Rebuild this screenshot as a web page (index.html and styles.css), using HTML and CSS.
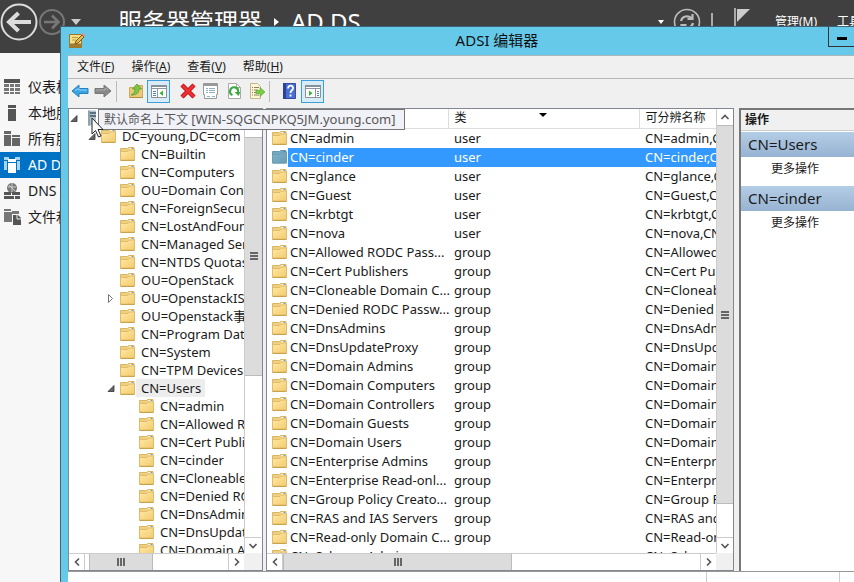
FILE: index.html
```html
<!DOCTYPE html>
<html lang="zh-CN">
<head>
<meta charset="utf-8">
<title>ADSI 编辑器</title>
<link rel="stylesheet" href="styles.css">
</head>
<body>
<svg class="sprite" aria-hidden="true">
  <defs>
    <linearGradient id="gold" x1="0" y1="0" x2="1" y2="1"><stop offset="0" stop-color="#ffe9a8"/><stop offset="1" stop-color="#f3cb6c"/></linearGradient>
    <linearGradient id="teal" x1="0" y1="0" x2="1" y2="1"><stop offset="0" stop-color="#7fb4c8"/><stop offset="1" stop-color="#689cb4"/></linearGradient>
    <symbol id="folder" viewBox="0 0 16 16">
      <path d="M.5 2.500h7l1-1h5.500v2h.5v10.500H.5z" fill="#f0d080" stroke="#d9b664"/>
      <path d="M9.500 2h4v1.500h-4z" fill="#fff6d8"/>
      <path d="M11.500 2h2v1h-2z" fill="#6f9dc0"/>
      <path d="M.5 14V5.500h7.500l1.500-1.500h5V14z" fill="url(#gold)" stroke="#e0bc68"/>
      <path d="M.5 14.500h14" stroke="#c9a24c"/>
    </symbol>
    <symbol id="folder-on" viewBox="0 0 16 16">
      <path d="M.5 2.500h7l1-1h5.500v2h.5v10.500H.5z" fill="#74a9be" stroke="#6698ae"/>
      <path d="M11.500 2h2v1h-2z" fill="#3f8fd0"/>
      <path d="M.5 14V5.500h7.500l1.500-1.500h5V14z" fill="url(#teal)" stroke="#6a9fb5"/>
    </symbol>
    <symbol id="open" viewBox="0 0 10 10"><path d="M8 2.500v6H2z" fill="#666" stroke="#333" stroke-width=".8"/></symbol>
    <symbol id="closed" viewBox="0 0 10 10"><path d="M2.500 1.500v8L6.500 5.500z" fill="#fff" stroke="#777"/></symbol>
    <symbol id="left" viewBox="0 0 16 16"><path d="M10 4.500L6.500 8l3.500 3.500" fill="none" stroke="#555" stroke-width="1.600"/></symbol>
    <symbol id="right" viewBox="0 0 16 16"><path d="M6 4.500L9.500 8 6 11.500" fill="none" stroke="#555" stroke-width="1.600"/></symbol>
    <symbol id="up" viewBox="0 0 16 16"><path d="M4.500 10L8 6.500l3.500 3.500" fill="none" stroke="#555" stroke-width="1.600"/></symbol>
    <symbol id="down" viewBox="0 0 16 16"><path d="M4.500 6L8 9.500 11.500 6" fill="none" stroke="#555" stroke-width="1.600"/></symbol>
  </defs>
</svg>

<div class="manager">
  <header class="banner">
    <button class="plain" aria-label="后退"><svg width="38" height="38" viewBox="0 0 38 38" fill="none" stroke="#dcdcdc"><circle cx="19" cy="19" r="17.500" stroke-width="2"/><path d="M31 19H9M18.500 10L9 19l9.500 9" stroke-width="4"/></svg></button>
    <button class="plain" aria-label="前进"><svg width="28" height="28" viewBox="0 0 28 28" fill="none" stroke="#777"><circle cx="14" cy="14" r="12" stroke-width="2"/><path d="M6 14h14M14 7.500l6.500 6.500-6.500 6.500" stroke-width="2.600"/></svg></button>
    <svg class="drop" width="10" height="6" viewBox="0 0 10 6"><path d="M0 0h10L5 6z" fill="#ccc"/></svg>
    <h1 class="crumbs">服务器管理器<svg width="5" height="8" viewBox="0 0 5 8"><path d="M0 0l5 4-5 4z" fill="#fff"/></svg>AD DS</h1>
    <svg class="drop-small" width="6" height="4" viewBox="0 0 6 4"><path d="M0 0h6L3 4z" fill="#fff"/></svg>
    <button class="plain refresh" aria-label="刷新"><svg width="28" height="28" viewBox="0 0 28 28" fill="none" stroke="#bbb"><circle cx="14" cy="14" r="12.500" stroke-width="1.600"/><path d="M8 13c1-5 7-6 10.500-3M19.500 6v5h-5M20 15c-1 5-7 6-10.500 3M8.500 22v-5h5" stroke-width="2.200"/></svg></button>
    <span class="banner-rule"></span>
    <button class="plain flag" aria-label="通知"><svg width="18" height="28" viewBox="0 0 18 28"><path d="M1 0h2v28H1z" fill="#aaa"/><path d="M4 1h13L4 14z" fill="#ccc"/></svg></button>
    <nav class="banner-menu"><a href="#">管理(M)</a><a href="#">工具(T)</a></nav>
  </header>
  <nav class="sidebar">
    <a href="#"><svg width="18" height="18" viewBox="0 0 18 18" fill="#777"><path d="M1 1h16v4H1z" fill="#555"/><path d="M1 6h5v3H1zM7 6h4v3H7zM12 6h5v3h-5zM1 10h5v3H1zM7 10h4v3H7zM12 10h5v3h-5zM1 14h5v2H1zM7 14h4v2H7zM12 14h5v2h-5z"/></svg>仪表板</a>
    <a href="#"><svg width="18" height="18" viewBox="0 0 18 18" fill="#555"><path d="M5 1h8v3H5zM5 5h8v12H5z"/></svg>本地服务器</a>
    <a href="#"><svg width="18" height="18" viewBox="0 0 18 18" fill="#666"><path d="M1 1h7v3H1zM1 5h7v11H1zM9 5h8v2H9zM9 8h8v8H9z"/></svg>所有服务器</a>
    <a href="#" class="current"><svg width="18" height="18" viewBox="0 0 18 18"><path d="M1 1h5v3H1zM1 5h3v9H1zM12 1h5v3h-5zM14 5h3v9h-3z" fill="#a9d4f1"/><path d="M5 3h8v3H5zM5 7h8v10H5z" fill="#fff"/></svg>AD DS</a>
    <a href="#"><svg width="18" height="18" viewBox="0 0 18 18"><circle cx="9" cy="6" r="5" fill="#777"/><path d="M5 5h8M9 1v9M6 3l6 6" stroke="#ccc"/><path d="M1 10h7v3H1zM9 10h8v3H9zM1 14h10v3H1zM12 14h5v3h-5z" fill="#555"/></svg>DNS</a>
    <a href="#"><svg width="18" height="18" viewBox="0 0 18 18" fill="#777"><path d="M1 1h7v2H1zM1 4h8v10H1zM9 3h7v3H9z"/><path d="M10 7h5l3 3v7h-8z" fill="#555"/><path d="M14 7v4h4" fill="none" stroke="#eee"/></svg>文件和存储服务</a>
  </nav>
</div>

<main class="window">
  <div class="titlebar">
    <svg width="18" height="18" viewBox="0 0 18 18"><path d="M1.500 2.500h12v13h-12z" fill="#f5df80" stroke="#9b7629"/><path d="M1 11.500h13v4H1z" fill="#a47a2c"/><path d="M4 5.500h6M4 8h4" stroke="#b79a4c"/><path d="M7 12l1-3 6-6 2 2-6 6z" fill="#e9bd45" stroke="#765b22"/><path d="M14 1.500l3 2.500" stroke="#e78f94" stroke-width="2"/></svg>
    <h2>ADSI 编辑器</h2>
    <button class="minimize" aria-label="最小化"><span></span></button>
  </div>
  <nav class="menubar">
    <button>文件(<u>F</u>)</button><button>操作(<u>A</u>)</button><button>查看(<u>V</u>)</button><button>帮助(<u>H</u>)</button>
  </nav>
  <div class="toolbar">
    <button aria-label="后退"><svg width="18" height="18" viewBox="0 0 18 18"><path d="M1 9l7-6v3.500h9v5H8V15z" fill="#3ba5e4" stroke="#2780bd"/><path d="M4 8.500l4-2v1.500h8" fill="none" stroke="#8bd3f7"/></svg></button>
    <button aria-label="前进"><svg width="18" height="18" viewBox="0 0 18 18"><path d="M17 9l-7-6v3.500H1v5h9V15z" fill="#888" stroke="#777"/><path d="M2 8h9V6l3 2" fill="none" stroke="#aaa"/></svg></button>
    <i class="rule"></i>
    <button aria-label="向上一级"><svg width="18" height="18" viewBox="0 0 18 18"><path d="M2.500 5.500h5l1.500-2h6.500v12h-13z" fill="#ecc978" stroke="#cfa75a"/><path d="M3 15.500h13" stroke="#b08c3e"/><path d="M4 13c3-1 4-4 4-6H5.500L10 2l4.500 5H12c0 4-3 6.500-8 6z" fill="#7dc843" stroke="#4c962b" stroke-width=".7"/></svg></button>
    <button class="pressed" aria-label="显示/隐藏控制台树"><svg width="18" height="16" viewBox="0 0 18 16"><path d="M1.500 2.500h15v12h-15z" fill="#fff" stroke="#8c9299"/><path d="M1 2h16v2H1z" fill="#878f98"/><path d="M2 5.500h14M7.500 6v8" stroke="#8e97a1"/><path d="M3 8.500h3M3 10.500h3M3 12.500h3" stroke="#4d86b8"/><path d="M13 7.500v5.500l-3.500-2.700z" fill="#36b832"/></svg></button>
    <button class="delete" aria-label="删除"><svg width="18" height="18" viewBox="0 0 18 18"><path d="M3 3l12 12M15 3L3 15" fill="none" stroke="#b71319" stroke-width="4.500"/><path d="M3 3l12 12M15 3L3 15" fill="none" stroke="#ef3030" stroke-width="2.600"/></svg></button>
    <button aria-label="属性"><svg width="18" height="18" viewBox="0 0 18 18"><path d="M1.500 1.500h14v11h-1v4h-12v-4h-1z" fill="#fff" stroke="#999"/><path d="M2 3h13" stroke="#999" stroke-width="2"/><path d="M4 6.500h2M7 6.500h6M4 8.500h2M7 8.500h6M4 10.500h2M7 10.500h6M5 14.500h3M10 14.500h3" stroke="#8fb0c4"/></svg></button>
    <button aria-label="刷新"><svg width="18" height="18" viewBox="0 0 18 18"><path d="M3.500 1.500h8l4 4v11h-12z" fill="#fff" stroke="#aaa"/><path d="M11.500 1.500v4h4" fill="none" stroke="#aaa"/><path d="M7.500 13A4 4 0 1 1 13 10" fill="none" stroke="#3eaa43" stroke-width="2.200"/><path d="M9.500 10h6l-2 4z" fill="#3eaa43"/></svg></button>
    <button aria-label="导出列表"><svg width="18" height="18" viewBox="0 0 18 18"><path d="M2.500 1.500h7l3 3v12h-10z" fill="#fdf5d3" stroke="#c4b78f"/><path d="M4 5.500h1M6 5.500h5M4 8h1M6 8h4M4 10.500h1M6 10.500h2M4 13h1M6 13h5" stroke="#8c8169"/><path d="M8 8.500h4V5.500l5 4.500-5 4.500v-3H8z" fill="#7acc43" stroke="#53a52d" stroke-width=".6"/></svg></button>
    <i class="rule gap"></i>
    <button aria-label="帮助"><svg width="18" height="18" viewBox="0 0 18 18"><path d="M3.500 1.500h12v15h-12z" fill="#4b70d3" stroke="#344b9e"/><path d="M3 1h3v16H3z" fill="#2c439b"/><path d="M8 6.500c0-4 5.500-3.500 5 0-.5 2-2.500 2-2.500 4.500M10.500 12.500v2" fill="none" stroke="#fff" stroke-width="1.800"/></svg></button>
    <button class="pressed" aria-label="显示/隐藏操作窗格"><svg width="18" height="16" viewBox="0 0 18 16"><path d="M1.500 2.500h15v12h-15z" fill="#fff" stroke="#8c9299"/><path d="M1 2h16v2H1z" fill="#878f98"/><path d="M2 5.500h14M11.500 6v8" stroke="#8e97a1"/><path d="M13 8.500h2M13 10.500h2M13 12.500h2" stroke="#4d86b8"/><path d="M5 7.500v5.500l3.500-2.700z" fill="#36b832"/></svg></button>
  </div>

  <div class="panes">
    <section class="pane tree-pane">
      <div class="view">
        <ul class="tree">
          <li class="l0"><svg class="exp"><use href="#open"/></svg><svg class="ico" viewBox="0 0 16 16"><path d="M5 .5h8v15H5z" fill="#b5c4cc"/><path d="M5 .5h2v15H5z" fill="#8fa3ae"/><path d="M7 3h6M7 6h6" stroke="#3c5565" stroke-width="1.500"/><path d="M9 10h3v3H9z" fill="#71899a"/></svg><span></span></li>
          <li class="l1"><svg class="exp"><use href="#open"/></svg><svg class="ico"><use href="#folder"/></svg><span>DC=young,DC=com</span></li>
          <li class="l2"><svg class="ico"><use href="#folder"/></svg><span>CN=Builtin</span></li>
          <li class="l2"><svg class="ico"><use href="#folder"/></svg><span>CN=Computers</span></li>
          <li class="l2"><svg class="ico"><use href="#folder"/></svg><span>OU=Domain Controllers</span></li>
          <li class="l2"><svg class="ico"><use href="#folder"/></svg><span>CN=ForeignSecurityPrincipals</span></li>
          <li class="l2"><svg class="ico"><use href="#folder"/></svg><span>CN=LostAndFound</span></li>
          <li class="l2"><svg class="ico"><use href="#folder"/></svg><span>CN=Managed Service Accounts</span></li>
          <li class="l2"><svg class="ico"><use href="#folder"/></svg><span>CN=NTDS Quotas</span></li>
          <li class="l2"><svg class="ico"><use href="#folder"/></svg><span>OU=OpenStack</span></li>
          <li class="l2"><svg class="exp"><use href="#closed"/></svg><svg class="ico"><use href="#folder"/></svg><span>OU=OpenstackISO</span></li>
          <li class="l2"><svg class="ico"><use href="#folder"/></svg><span>OU=Openstack事业部</span></li>
          <li class="l2"><svg class="ico"><use href="#folder"/></svg><span>CN=Program Data</span></li>
          <li class="l2"><svg class="ico"><use href="#folder"/></svg><span>CN=System</span></li>
          <li class="l2"><svg class="ico"><use href="#folder"/></svg><span>CN=TPM Devices</span></li>
          <li class="l2 picked"><svg class="exp"><use href="#open"/></svg><svg class="ico"><use href="#folder"/></svg><span>CN=Users</span></li>
          <li class="l3"><svg class="ico"><use href="#folder"/></svg><span>CN=admin</span></li>
          <li class="l3"><svg class="ico"><use href="#folder"/></svg><span>CN=Allowed RODC</span></li>
          <li class="l3"><svg class="ico"><use href="#folder"/></svg><span>CN=Cert Publishers</span></li>
          <li class="l3"><svg class="ico"><use href="#folder"/></svg><span>CN=cinder</span></li>
          <li class="l3"><svg class="ico"><use href="#folder"/></svg><span>CN=Cloneable Domain</span></li>
          <li class="l3"><svg class="ico"><use href="#folder"/></svg><span>CN=Denied RODC</span></li>
          <li class="l3"><svg class="ico"><use href="#folder"/></svg><span>CN=DnsAdmins</span></li>
          <li class="l3"><svg class="ico"><use href="#folder"/></svg><span>CN=DnsUpdateProxy</span></li>
          <li class="l3"><svg class="ico"><use href="#folder"/></svg><span>CN=Domain Admins</span></li>
        </ul>
      </div>
      <div class="vbar"><button aria-label="向上滚动"><svg><use href="#up"/></svg></button><div class="track"><div class="thumb tree-v"><i></i></div></div><button aria-label="向下滚动"><svg><use href="#down"/></svg></button></div>
      <div class="hbar"><button aria-label="向左滚动"><svg><use href="#left"/></svg></button><div class="track"><div class="thumb tree-h"><i></i></div></div><button aria-label="向右滚动"><svg><use href="#right"/></svg></button></div>
    </section>

    <section class="pane list-pane">
      <div class="view">
        <table class="list">
          <colgroup><col class="c-name"><col class="c-class"><col class="c-dn"></colgroup>
          <thead><tr><th aria-label="名称"></th><th>类<svg class="sort" width="8" height="4" viewBox="0 0 8 4"><path d="M0 0h8L4 4z"/></svg></th><th>可分辨名称</th></tr></thead>
          <tbody>
            <tr><td><svg class="ico"><use href="#folder"/></svg><span>CN=admin</span></td><td>user</td><td>CN=admin,CN=Users</td></tr>
            <tr class="selected"><td><svg class="ico"><use href="#folder-on"/></svg><span>CN=cinder</span></td><td>user</td><td>CN=cinder,CN=Users</td></tr>
            <tr><td><svg class="ico"><use href="#folder"/></svg><span>CN=glance</span></td><td>user</td><td>CN=glance,CN=Users</td></tr>
            <tr><td><svg class="ico"><use href="#folder"/></svg><span>CN=Guest</span></td><td>user</td><td>CN=Guest,CN=Users</td></tr>
            <tr><td><svg class="ico"><use href="#folder"/></svg><span>CN=krbtgt</span></td><td>user</td><td>CN=krbtgt,CN=Users</td></tr>
            <tr><td><svg class="ico"><use href="#folder"/></svg><span>CN=nova</span></td><td>user</td><td>CN=nova,CN=Users</td></tr>
            <tr><td><svg class="ico"><use href="#folder"/></svg><span>CN=Allowed RODC Pass...</span></td><td>group</td><td>CN=Allowed RODC</td></tr>
            <tr><td><svg class="ico"><use href="#folder"/></svg><span>CN=Cert Publishers</span></td><td>group</td><td>CN=Cert Publishers</td></tr>
            <tr><td><svg class="ico"><use href="#folder"/></svg><span>CN=Cloneable Domain C...</span></td><td>group</td><td>CN=Cloneable Domain</td></tr>
            <tr><td><svg class="ico"><use href="#folder"/></svg><span>CN=Denied RODC Passw...</span></td><td>group</td><td>CN=Denied RODC</td></tr>
            <tr><td><svg class="ico"><use href="#folder"/></svg><span>CN=DnsAdmins</span></td><td>group</td><td>CN=DnsAdmins</td></tr>
            <tr><td><svg class="ico"><use href="#folder"/></svg><span>CN=DnsUpdateProxy</span></td><td>group</td><td>CN=DnsUpdateProxy</td></tr>
            <tr><td><svg class="ico"><use href="#folder"/></svg><span>CN=Domain Admins</span></td><td>group</td><td>CN=Domain Admins</td></tr>
            <tr><td><svg class="ico"><use href="#folder"/></svg><span>CN=Domain Computers</span></td><td>group</td><td>CN=Domain Computers</td></tr>
            <tr><td><svg class="ico"><use href="#folder"/></svg><span>CN=Domain Controllers</span></td><td>group</td><td>CN=Domain Controllers</td></tr>
            <tr><td><svg class="ico"><use href="#folder"/></svg><span>CN=Domain Guests</span></td><td>group</td><td>CN=Domain Guests</td></tr>
            <tr><td><svg class="ico"><use href="#folder"/></svg><span>CN=Domain Users</span></td><td>group</td><td>CN=Domain Users</td></tr>
            <tr><td><svg class="ico"><use href="#folder"/></svg><span>CN=Enterprise Admins</span></td><td>group</td><td>CN=Enterprise Admins</td></tr>
            <tr><td><svg class="ico"><use href="#folder"/></svg><span>CN=Enterprise Read-onl...</span></td><td>group</td><td>CN=Enterprise Read-only</td></tr>
            <tr><td><svg class="ico"><use href="#folder"/></svg><span>CN=Group Policy Creato...</span></td><td>group</td><td>CN=Group Policy</td></tr>
            <tr><td><svg class="ico"><use href="#folder"/></svg><span>CN=RAS and IAS Servers</span></td><td>group</td><td>CN=RAS and IAS Servers</td></tr>
            <tr><td><svg class="ico"><use href="#folder"/></svg><span>CN=Read-only Domain C...</span></td><td>group</td><td>CN=Read-only Domain</td></tr>
            <tr><td><svg class="ico"><use href="#folder"/></svg><span>CN=Schema Admins</span></td><td>group</td><td>CN=Schema Admins</td></tr>
          </tbody>
        </table>
      </div>
      <div class="vbar"><button aria-label="向上滚动"><svg><use href="#up"/></svg></button><div class="track"><div class="thumb list-v"><i></i></div></div><button aria-label="向下滚动"><svg><use href="#down"/></svg></button></div>
      <div class="hbar"><button aria-label="向左滚动"><svg><use href="#left"/></svg></button><div class="track"><div class="thumb list-h"><i></i></div></div><button aria-label="向右滚动"><svg><use href="#right"/></svg></button></div>
    </section>

    <aside class="actions">
      <h3>操作</h3>
      <h4>CN=Users</h4>
      <button>更多操作</button>
      <h4>CN=cinder</h4>
      <button>更多操作</button>
    </aside>
  </div>
  <footer class="status"><span></span><span></span><span></span></footer>

  <div class="tip" role="tooltip">默认命名上下文 <span>[WIN-SQGCNPKQ5JM.young.com]</span></div>
  <svg class="pointer" width="13" height="21" viewBox="0 0 13 21"><path d="M1 1v16l3.500-3.500L7.500 20l2.500-1-3-6.500H12z" fill="#fff" stroke="#222"/></svg>
</main>
</body>
</html>
```

FILE: styles.css
```css
* { box-sizing: border-box; }

body {
  margin: 0;
  height: 100vh;
  position: relative;
  overflow: hidden;
  background: #f7f7f7;
  color: #1a1a1a;
  font: 13px/18px "Noto Sans", "Noto Sans CJK SC", sans-serif;
}

h1, h2, h3, h4, ul { margin: 0; padding: 0; font-weight: 400; }
ul { list-style: none; }
a { color: inherit; text-decoration: none; }
button { font: inherit; color: inherit; background: none; border: 0; padding: 0; }
svg { display: block; flex: none; }
.sprite { position: absolute; width: 0; height: 0; }

/* Server manager behind the console */
.banner {
  display: flex;
  align-items: center;
  height: 53px;
  padding-bottom: 9px;
  background: #404040;
  color: #fff;
  white-space: nowrap;
  overflow: hidden;
}
.drop { margin-left: 5px; }
.crumbs { display: flex; align-items: center; gap: 12px; margin-left: 37px; font-size: 24px; line-height: 32px; }
.drop-small { margin-left: auto; }
.refresh { margin-left: 9px; }
.banner-rule { width: 2px; height: 18px; margin-left: 10px; background: #aaa; }
.flag { margin: 0 24px 0 20px; }
.banner-menu { display: flex; gap: 20px; width: 79px; font-size: 12px; }

.sidebar { padding-top: 21px; font-size: 14px; }
.sidebar a { display: flex; align-items: center; gap: 7px; height: 26px; padding-left: 3px; white-space: nowrap; }
.sidebar .current { background: #0072c6; color: #fff; }

/* Console window */
.window {
  position: absolute;
  inset: 26px 0 0 60px;
  display: flex;
  flex-direction: column;
  border-left: 1px solid #3a6578;
  border-top: 1px solid #3a6578;
  padding-left: 7px;
  background: #67c9ea;
}
.titlebar { display: flex; align-items: flex-start; height: 28px; }
.titlebar > svg { margin-top: 5px; }
.titlebar h2 { flex: 1; padding-left: 80px; text-align: center; font-size: 15px; line-height: 26px; color: #111; }
.minimize { width: 26px; height: 20px; display: flex; align-items: center; justify-content: center; padding-top: 3px; border: solid #333; border-width: 0 0 1px 1px; }
.minimize span { width: 10px; height: 3px; background: #000; }

.menubar { display: flex; gap: 17px; height: 24px; padding-left: 9px; background: #f0f0f0; border-top: 1px solid #aab8be; border-bottom: 1px solid #b8b8b8; font-size: 12px; }

.toolbar { display: flex; align-items: center; height: 29px; padding-bottom: 5px; background: #f0f0f0; }
.toolbar button { width: 23px; height: 23px; display: grid; place-items: center; }
.toolbar .rule { width: 1px; height: 21px; margin: 0 7px 0 2px; background: #bbb; }
.toolbar .gap { margin: 0 7px 0 1px; }
.toolbar .pressed { border: 1px solid #3c9edb; background: #d8ebf8; }
.toolbar .delete { margin-left: 6px; }
.toolbar .gap + button + .pressed { margin-left: 1px; }

.panes { flex: 1; min-height: 0; display: grid; grid-template-columns: 195px minmax(0, 468px) minmax(115px, 1fr); column-gap: 3px; background: #f0f0f0; }
.pane {
  display: grid;
  grid-template: minmax(0, 1fr) 17px / minmax(0, 1fr) 17px;
  min-height: 0;
  border: 1px solid #828790;
  background: #f0f0f0;
}
.tree-pane { grid-template-columns: minmax(0, 1fr) 18px; }
.view { overflow: hidden; min-height: 0; background: #fff; }
.ico { width: 16px; height: 16px; }

.tree li { display: flex; align-items: center; height: 18px; white-space: nowrap; }
.exp { width: 10px; height: 10px; margin: 0 4px 0 -14px; }
.tree span { padding-left: 5px; }
.tree .l0 { padding-left: 14px; }
.tree .l1 { padding-left: 32px; }
.tree .l2 { padding-left: 51px; }
.tree .l3 { padding-left: 70px; }
.tree .picked span { padding-right: 4px; background: #ededed; }

.list { table-layout: fixed; width: 570px; border-collapse: collapse; }
.c-name { width: 181px; }
.c-class { width: 191px; }
.list tr { height: 19px; }
.list th, .list td { padding: 0 0 0 6px; height: 19px; line-height: 18px; text-align: left; font-weight: 400; white-space: nowrap; }
.list th { position: relative; border-right: 1px solid #ddd; border-bottom: 1px solid #ddd; font-size: 12px; }
.sort { position: absolute; top: 4px; left: 50%; margin-left: -5px; }
.list td:first-child { display: flex; align-items: center; gap: 2px; padding-left: 5px; }
.selected td { background: #3399ff; color: #fff; }
.selected td:first-child { background: linear-gradient(to right, #fff 21px, #3399ff 21px); }

.vbar, .hbar { display: flex; background: #fff; }
.vbar { flex-direction: column; border-left: 1px solid #ccc; }
.hbar { border-top: 1px solid #ccc; }
.vbar svg, .hbar svg { width: 16px; height: 16px; }
.vbar button, .hbar button { width: 16px; height: 16px; border: 0 solid #ccc; }
.track { flex: 1; }
.thumb { display: grid; place-items: center; background: #dcdcdc; border: 1px solid #bbb; }
.thumb i { width: 8px; height: 8px; }
.vbar .thumb { border-left: 0; border-right: 0; }
.hbar .thumb { height: 16px; border-top: 0; border-bottom: 0; }
.vbar i { background: repeating-linear-gradient(#666 0 2px, transparent 2px 3px); }
.hbar i { background: repeating-linear-gradient(to right, #666 0 2px, transparent 2px 3px); }
.vbar button:last-child { border-top-width: 1px; }
.hbar button:first-child { border-right-width: 1px; }
.hbar button:last-child { border-left-width: 1px; }
.tree-v { height: 58%; margin-top: 12px; }
.tree-h { width: 45%; margin-left: 4px; }
.list-v { height: 92%; }
.list-h { width: 55%; }

.actions { margin-left: 2px; border-left: 2px solid #777; border-top: 2px solid #777; background: #fff; }
.actions h3 { height: 21px; padding-left: 4px; background: #f0f0f0; border-bottom: 1px solid #ccc; font-size: 12px; line-height: 20px; font-weight: 700; }
.actions h4 { margin-top: 1px; padding-left: 7px; background: linear-gradient(#b4cde6, #97b3d2); font-size: 15px; line-height: 25px; }
.actions button { display: block; height: 24px; margin: 0 0 5px 30px; font-size: 12px; }

.status { display: flex; height: 11px; background: #fff; border-top: 1px solid #999; }
.status span { border-right: 1px solid #ccc; }
.status span:nth-child(1) { flex: 1; }
.status span:nth-child(2) { width: 133px; }
.status span:nth-child(3) { width: 14px; border: 0; }

.tip { position: absolute; left: 37px; top: 82px; padding: 0 9px 0 5px; border: 1px solid #777; background: #f1f1f8; color: #575757; line-height: 18px; font-size: 12px; white-space: nowrap; }
.tip span { font-size: 13px; }
.pointer { position: absolute; left: 30px; top: 90px; }
```
